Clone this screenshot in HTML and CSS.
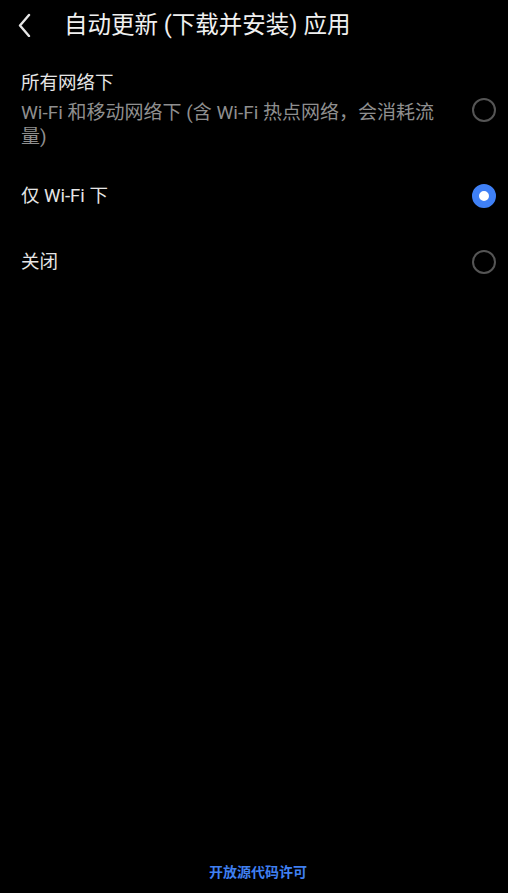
FILE: index.html
```html
<!DOCTYPE html>
<html lang="zh">
<head>
<meta charset="utf-8">
<link rel="stylesheet" href="styles.css">
</head>
<body>
<div class="page">
  <header class="bar">
    <svg class="back" width="14" height="24" viewBox="0 0 14 24"><path d="M11 2 L2 12.5 L11 23" fill="none" stroke="#e6e6e6" stroke-width="2.4" stroke-linecap="round" stroke-linejoin="round"/></svg>
    <h1 class="title">自动更新 (下载并安装) 应用</h1>
  </header>
  <ul class="list">
    <li class="item item-tall">
      <div class="texts">
        <div class="label">所有网络下</div>
        <div class="sub">Wi-Fi 和移动网络下 (含 Wi-Fi 热点网络，会消耗流量)</div>
      </div>
      <span class="radio"></span>
    </li>
    <li class="item">
      <div class="texts"><div class="label">仅 Wi-Fi 下</div></div>
      <span class="radio on"></span>
    </li>
    <li class="item">
      <div class="texts"><div class="label">关闭</div></div>
      <span class="radio"></span>
    </li>
  </ul>
  <footer class="foot">开放源代码许可</footer>
</div>
</body>
</html>
```
FILE: styles.css
```css
html, body { margin: 0; padding: 0; background: #000; }
body { font-family: Roboto, "Noto Sans CJK SC", sans-serif; color: #e6e6e6; }
.page { width: 508px; height: 893px; display: flex; flex-direction: column; }
.bar { height: 50px; display: flex; align-items: center; padding-left: 18px; }
.back { display: block; margin-top: -1px; }
.title { margin: 0 0 0 32px; font-size: 23.5px; font-weight: 400; color: #f0f0f0; line-height: 30px; }
.list { list-style: none; margin: 0; padding: 0; }
.item { display: flex; align-items: center; padding: 0 12px 0 21px; height: 66px; }
.item-tall { height: auto; padding-top: 21px; padding-bottom: 14px; }
.texts { flex: 1; padding-right: 30px; }
.label { font-size: 18.5px; line-height: 24px; color: #e6e6e6; }
.sub { font-size: 19px; line-height: 24px; color: #8f8f8f; margin-top: 6px; }
.radio { width: 20px; height: 20px; border: 2px solid #555; border-radius: 50%; flex: none; box-sizing: content-box; }
.radio.on { width: 10px; height: 10px; border: 7px solid #3f80f6; background: #fff; }
.foot { margin-top: auto; text-align: center; color: #3f7ff0; font-size: 14px; font-weight: 700; padding: 0 0 11px 8px; line-height: 20px; }
```
